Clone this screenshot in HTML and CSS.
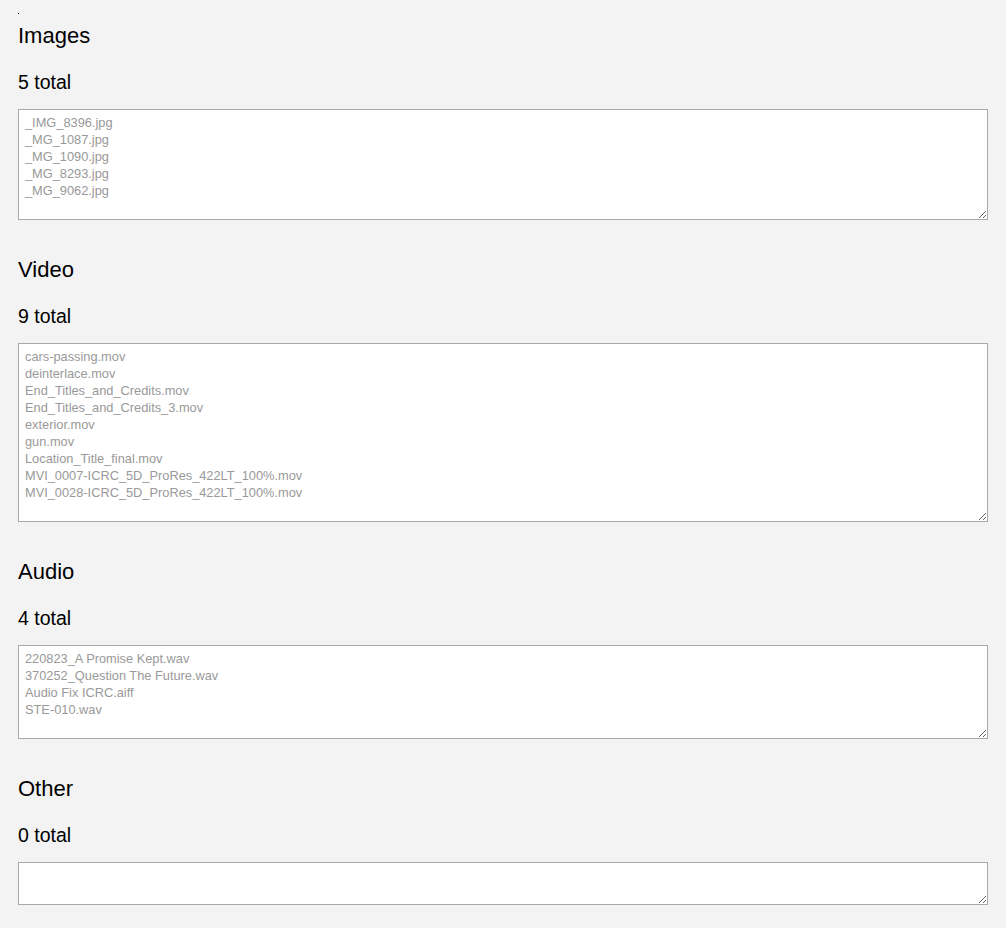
FILE: index.html
```html
<!DOCTYPE html>
<html lang="en">
<head>
<meta charset="utf-8">
<title>Media</title>
<link rel="stylesheet" href="styles.css">
</head>
<body>
<div class="page">
  <div class="dot"></div>
  <section class="group">
    <h2>Images</h2>
    <p class="total">5 total</p>
    <textarea class="list h-images" readonly>_IMG_8396.jpg
_MG_1087.jpg
_MG_1090.jpg
_MG_8293.jpg
_MG_9062.jpg</textarea>
  </section>
  <section class="group">
    <h2>Video</h2>
    <p class="total">9 total</p>
    <textarea class="list h-video" readonly>cars-passing.mov
deinterlace.mov
End_Titles_and_Credits.mov
End_Titles_and_Credits_3.mov
exterior.mov
gun.mov
Location_Title_final.mov
MVI_0007-ICRC_5D_ProRes_422LT_100%.mov
MVI_0028-ICRC_5D_ProRes_422LT_100%.mov</textarea>
  </section>
  <section class="group">
    <h2>Audio</h2>
    <p class="total">4 total</p>
    <textarea class="list h-audio" readonly>220823_A Promise Kept.wav
370252_Question The Future.wav
Audio Fix ICRC.aiff
STE-010.wav</textarea>
  </section>
  <section class="group">
    <h2>Other</h2>
    <p class="total">0 total</p>
    <textarea class="list h-other" readonly></textarea>
  </section>
</div>
</body>
</html>
```
FILE: styles.css
```css
html, body {
  margin: 0;
  padding: 0;
}
body {
  background: #f3f3f3;
  font-family: "Liberation Sans", Arial, Helvetica, sans-serif;
  color: #000;
}
.page {
  padding: 0 18px;
  display: flex;
  flex-direction: column;
}
.dot {
  width: 1px;
  height: 1px;
  background: #000;
  margin-top: 13px;
}
.group {
  display: flex;
  flex-direction: column;
  margin-top: 36px;
}
.dot + .group {
  margin-top: 8px;
}
.group h2 {
  margin: 1px 0 0;
  font-size: 22px;
  line-height: 26px;
  font-weight: normal;
}
.total {
  margin: 22px 0 16px;
  font-size: 19.5px;
  line-height: 22px;
}
.list {
  display: block;
  box-sizing: border-box;
  width: 100%;
  margin: 0;
  padding: 4px 6px 2px;
  border: 1px solid #a9a9a9;
  border-radius: 0;
  background: #fff;
  color: #999;
  font-family: "Liberation Sans", Arial, Helvetica, sans-serif;
  font-size: 12.8px;
  line-height: 17px;
  outline: none;
  resize: vertical;
}
.h-images { height: 111px; }
.h-video { height: 179px; }
.h-audio { height: 94px; }
.h-other { height: 43px; }
```
